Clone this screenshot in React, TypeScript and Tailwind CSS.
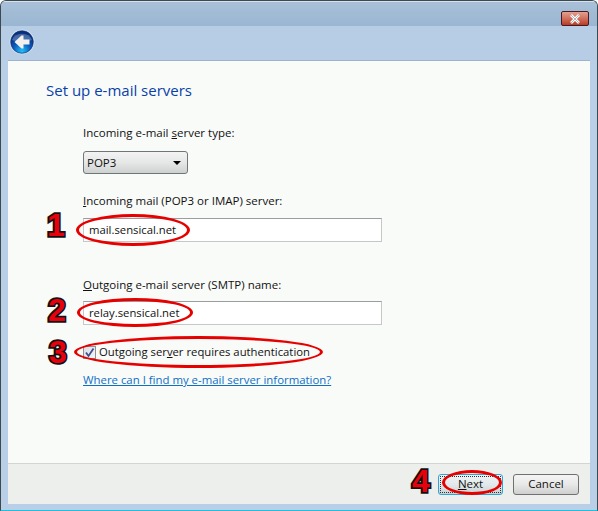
import React from 'react'

const font = { fontFamily: '"Open Sans", "Noto Sans", sans-serif' }

// red hand-drawn style ellipse put over the form
function Oval({ className }: { className: string }) {
  return <div className={`absolute rounded-[50%] border-[3px] border-[#e60000] ${className}`} />
}

function Step({ n, className }: { n: string; className: string }) {
  return (
    <span
      className={`absolute font-bold text-[32px] leading-none text-[#e8000c] [-webkit-text-stroke:3.5px_#111] [paint-order:stroke_fill] ${className}`}
      style={{ fontFamily: '"Liberation Sans", sans-serif' }}
    >
      {n}
    </span>
  )
}

function BackIcon() {
  return (
    <svg width="26" height="26" viewBox="0 0 26 26">
      <defs>
        <radialGradient id="b" cx="50%" cy="90%" r="75%">
          <stop offset="0%" stopColor="#22c0f8" />
          <stop offset="55%" stopColor="#0b55b8" />
          <stop offset="100%" stopColor="#0a2f7c" />
        </radialGradient>
      </defs>
      <circle cx="13" cy="13" r="12.5" fill="#dbe7f3" opacity="0.7" />
      <circle cx="13" cy="13" r="11.3" fill="url(#b)" stroke="#0c2f6b" strokeWidth="0.6" />
      <path d="M3 11 A10.5 9 0 0 1 23 11 Q13 15 3 11Z" fill="#fff" opacity="0.25" />
      <path d="M5.5 13 L12.5 6.5 L14.5 6.5 L14.5 10.5 L20.5 10.5 L20.5 15.5 L14.5 15.5 L14.5 19.5 L12.5 19.5Z" fill="#f4f1ec" />
    </svg>
  )
}

export default function App() {
  return (
    <div
      className="relative w-[598px] h-[511px] flex flex-col overflow-hidden rounded-t-[6px] border border-[#3c4a50] border-b-[#19c3e0] bg-[#b9cfe7] text-[11.5px] text-[#111]"
      style={font}
    >
      {/* title bar */}
      <div className="h-[25px] flex justify-end bg-gradient-to-b from-[#a9c0d8] to-[#9ab6d2] pr-[8px] pt-[9px] border-t border-white/60 shrink-0">
        <button className="w-[28px] h-[15px] rounded-[2px] border border-[#4a1a22] bg-gradient-to-b from-[#e2a092] via-[#d0705c] to-[#b83a22] flex items-center justify-center">
          <svg width="12" height="10" viewBox="0 0 12 10">
            <path d="M2 1 L10 9 M10 1 L2 9" stroke="#fff" strokeWidth="2.6" />
            <path d="M2 1 L10 9 M10 1 L2 9" stroke="#8d99a3" strokeWidth="0.7" />
          </svg>
        </button>
      </div>

      {/* back button row */}
      <div className="h-[34px] pl-[8px] pt-[3px] bg-[#b7cde5] shrink-0">
        <BackIcon />
      </div>

      {/* wizard page */}
      <div className="flex-1 mx-[7px] mb-[6px] flex flex-col bg-[#f9fbf9] border-t border-[#9fb4cc]">
        <div className="flex-1 flex flex-col pl-[38px] pt-[18px]">
          <h1 className="text-[15px] leading-[22px] text-[#0a3fa8]">Set up e-mail servers</h1>
          <div className="pl-[37px] pt-[23px] flex flex-col items-start">
            <label className="leading-[18px]">Incoming e-mail <u>s</u>erver type:</label>
            <div className="mt-[9px] w-[105px] h-[23px] rounded-[3px] border border-[#6f7678] bg-gradient-to-b from-[#f2f3f2] via-[#e6e8e7] to-[#cdd1d0] flex items-center justify-between pl-[3px] pr-[6px]">
              <span>POP3</span>
              <span className="w-0 h-0 border-x-[4px] border-x-transparent border-t-[4px] border-t-black" />
            </div>
            <label className="mt-[18px] leading-[18px]"><u>I</u>ncoming mail (POP3 or IMAP) server:</label>
            <div className="mt-[8px] w-[299px] h-[24px] border border-[#c4c8c9] border-t-[#9a9d9f] bg-white flex items-center pl-[5px] text-[11.3px]">
              mail.sensical.net
            </div>
            <label className="mt-[34px] leading-[18px]"><u>O</u>utgoing e-mail server (SMTP) name:</label>
            <div className="mt-[7px] w-[299px] h-[24px] border border-[#c4c8c9] border-t-[#9a9d9f] bg-white flex items-center pl-[5px] text-[11.3px]">
              relay.sensical.net
            </div>
            <div className="mt-[18px] flex items-center gap-[3px] leading-[18px] text-[11.3px]">
              <span className="w-[13px] h-[13px] border border-[#8e8f8f] bg-gradient-to-br from-[#d9dfe6] to-[#f4f6f8] flex items-center justify-center">
                <svg width="11" height="11" viewBox="0 0 11 11">
                  <path d="M2 5.5 L4.5 9 L9.5 1.5" fill="none" stroke="#3f4f8f" strokeWidth="1.8" />
                </svg>
              </span>
              <span>Outgoing ser<u>v</u>er requires authentication</span>
            </div>
            <a className="mt-[10px] leading-[18px] text-[11.4px] text-[#0f6fc6] underline">Where can I find my e-mail server information?</a>
          </div>
        </div>

        {/* footer */}
        <div className="h-[41px] shrink-0 bg-[#ecefec] border-t border-[#d2d5d2] flex items-center justify-end gap-[10px] pr-[11px]">
          <button className="w-[65px] h-[21px] rounded-[3px] border border-[#2fa4d8] bg-gradient-to-b from-[#eef3f4] via-[#e3e9ea] to-[#c6d2d4] p-px">
            <span className="flex h-full items-center justify-center border border-dotted border-[#333]"><span><u>N</u>ext</span></span>
          </button>
          <button className="w-[66px] h-[21px] rounded-[3px] border border-[#707070] bg-gradient-to-b from-[#f4f4f4] via-[#e8e8e8] to-[#cfcfcf]">Cancel</button>
        </div>
      </div>

      {/* red annotations over the form */}
      <Oval className="left-[75px] top-[213px] w-[114px] h-[32px]" />
      <Oval className="left-[76px] top-[297px] w-[116px] h-[29px]" />
      <Oval className="left-[73px] top-[335px] w-[249px] h-[32px]" />
      <Oval className="left-[441px] top-[469px] w-[60px] h-[25px]" />
      <Step n="1" className="left-[46px] top-[208px]" />
      <Step n="2" className="left-[47px] top-[293px]" />
      <Step n="3" className="left-[48px] top-[335px]" />
      <Step n="4" className="left-[411px] top-[464px]" />
    </div>
  )
}
